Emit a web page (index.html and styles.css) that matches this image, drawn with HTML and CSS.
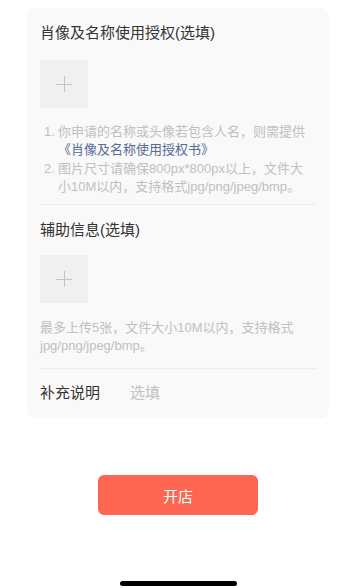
FILE: index.html
```html
<!DOCTYPE html>
<html lang="zh-CN">
<head>
<meta charset="utf-8">
<meta name="viewport" content="width=352">
<link rel="stylesheet" href="styles.css">
</head>
<body>
<div class="page">
  <div class="card">
    <div class="section first">
      <div class="title">肖像及名称使用授权(选填)</div>
      <div class="upload"><span class="plus"></span></div>
      <ol class="notes">
        <li><span class="num">1.</span><span class="txt">你申请的名称或头像若包含人名，则需提供<a class="link">《肖像及名称使用授权书》</a></span></li>
        <li><span class="num">2.</span><span class="txt">图片尺寸请确保800px*800px以上，文件大<br>小10M以内，支持格式jpg/png/jpeg/bmp。</span></li>
      </ol>
    </div>
    <div class="section second">
      <div class="title">辅助信息(选填)</div>
      <div class="upload"><span class="plus"></span></div>
      <p class="hint">最多上传5张，文件大小10M以内，支持格式<span class="nw">jpg/png/jpeg/bmp。</span></p>
    </div>
    <div class="row">
      <span class="label">补充说明</span>
      <span class="placeholder">选填</span>
    </div>
  </div>
  <button class="btn">开店</button>
  <div class="home"></div>
</div>
</body>
</html>
```
FILE: styles.css
```css
html, body {
  margin: 0;
  padding: 0;
  background: #ffffff;
}
body {
  font-family: "Liberation Sans", "Noto Sans CJK SC", sans-serif;
  color: #333333;
}
.page {
  padding: 8px 0 0 4px;
  width: 348px;
  display: flex;
  flex-direction: column;
}
.card {
  margin: 0 23px;
  background: #f9f9f9;
  border-radius: 8px;
  padding: 0 13px;
}
.section {
  border-bottom: 1px solid #ececec;
}
.section.first {
  padding: 14px 0 8px;
}
.section.second {
  padding: 14px 0 13px;
}
.title {
  font-size: 15px;
  line-height: 22px;
  color: #333333;
}
.upload {
  width: 48px;
  height: 48px;
  background: #f0f0f0;
  display: flex;
  align-items: center;
  justify-content: center;
}
.first .upload {
  margin-top: 16px;
}
.second .upload {
  margin-top: 14px;
}
.plus {
  position: relative;
  width: 16px;
  height: 16px;
}
.plus::before, .plus::after {
  content: "";
  position: absolute;
  background: #c4c4c4;
}
.plus::before {
  left: 0;
  right: 0;
  top: 7.5px;
  height: 1px;
}
.plus::after {
  top: 0;
  bottom: 0;
  left: 7.5px;
  width: 1px;
}
.notes {
  list-style: none;
  margin: 15px 0 0;
  padding: 0 0 0 4px;
  font-size: 13px;
  line-height: 18.33px;
  color: #c0c0c0;
}
.notes li {
  display: flex;
}
.num {
  flex: 0 0 14px;
}
.txt {
  flex: 1;
}
.link {
  color: #576b95;
}
.hint {
  margin: 16px 0 0;
  font-size: 13px;
  line-height: 18px;
  color: #c0c0c0;
}
.nw {
  white-space: nowrap;
}
.row {
  display: flex;
  align-items: center;
  padding: 13px 0 14px;
  font-size: 15px;
  line-height: 22px;
}
.label {
  width: 90px;
  color: #333333;
}
.placeholder {
  color: #c0c0c0;
}
.btn {
  align-self: center;
  margin-top: 57px;
  width: 160px;
  height: 40px;
  border: none;
  border-radius: 6px;
  background: #fe6651;
  color: #ffffff;
  font-family: "Liberation Sans", "Noto Sans CJK SC", sans-serif;
  font-size: 15px;
  padding: 0;
}
.home {
  align-self: center;
  margin-top: 66px;
  width: 117px;
  height: 5px;
  border-radius: 3px;
  background: #000000;
}
```
